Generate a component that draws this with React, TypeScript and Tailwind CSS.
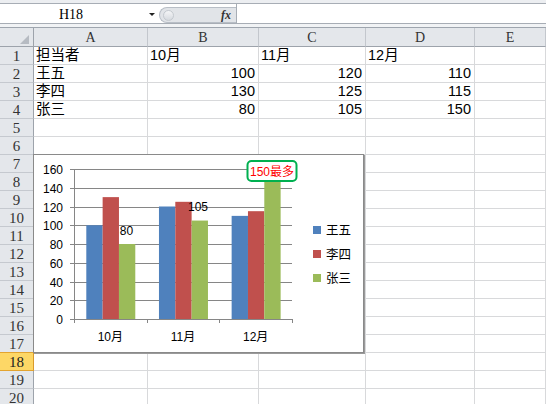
import React from "react";

const COLS = ["A", "B", "C", "D", "E"];
type Cell = { t: string; r?: boolean };
const DATA: Cell[][] = [
  [{ t: "担当者" }, { t: "10月" }, { t: "11月" }, { t: "12月" }],
  [{ t: "王五" }, { t: "100", r: true }, { t: "120", r: true }, { t: "110", r: true }],
  [{ t: "李四" }, { t: "130", r: true }, { t: "125", r: true }, { t: "115", r: true }],
  [{ t: "张三" }, { t: "80", r: true }, { t: "105", r: true }, { t: "150", r: true }],
];

const SERIES = [
  { name: "王五", color: "#4f81bd", vals: [100, 120, 110] },
  { name: "李四", color: "#c0504d", vals: [130, 125, 115] },
  { name: "张三", color: "#9bbb59", vals: [80, 105, 150] },
];
const MONTHS = ["10月", "11月", "12月"];

const yOf = (v: number) => 164 - v * 0.9375;
const CAT = 72.67;
const BW = 16.33;
const SERIF = '"Liberation Serif","Noto Sans CJK SC",serif';

function Chart() {
  const ticks = [0, 20, 40, 60, 80, 100, 120, 140, 160];
  return (
    <svg width="329" height="197" className="block" style={{ fontFamily: '"Liberation Sans","Noto Sans CJK SC",sans-serif' }}>
      {ticks.map((v) => {
        const y = Math.round(yOf(v)) + 0.5;
        return (
          <g key={v}>
            <line x1={36} x2={258} y1={y} y2={y} stroke="#868686" strokeWidth={1} />
            <text x={29} y={y + 4} fontSize={12} textAnchor="end" fill="#000">
              {v}
            </text>
          </g>
        );
      })}
      {SERIES.map((s, si) =>
        s.vals.map((v, ci) => {
          const x = 40 + CAT * ci + 12.3 + BW * si;
          const y = yOf(v);
          return <rect key={si + "-" + ci} x={x} y={y} width={BW} height={164 - y} fill={s.color} />;
        })
      )}
      <line x1={40.5} x2={40.5} y1={14} y2={168} stroke="#868686" />
      {[40, 112.67, 185.33, 258].map((x) => (
        <line key={x} x1={Math.round(x) + 0.5} x2={Math.round(x) + 0.5} y1={164} y2={168} stroke="#868686" />
      ))}
      <line x1={40} x2={259} y1={164.5} y2={164.5} stroke="#868686" />
      {MONTHS.map((m, i) => (
        <text key={m} x={40 + CAT * i + CAT / 2} y={186} fontSize={12} textAnchor="middle" fill="#000">
          {m}
        </text>
      ))}
      <text x={92.5} y={79.5} fontSize={12} textAnchor="middle" fill="#000">80</text>
      <text x={164} y={56} fontSize={12} textAnchor="middle" fill="#000">105</text>
      <rect x={213.5} y={6} width={49} height={20} rx={4} fill="#fff" stroke="#00b050" strokeWidth={2} />
      <text x={238} y={20.5} fontSize={12} textAnchor="middle" fill="#ff0000">150最多</text>
      {SERIES.map((s, i) => {
        const cy = 75 + i * 24;
        return (
          <g key={s.name}>
            <rect x={279} y={cy - 4} width={8} height={8} fill={s.color} />
            <text x={292} y={cy + 4.5} fontSize={12.5} fill="#000">
              {s.name}
            </text>
          </g>
        );
      })}
    </svg>
  );
}

export default function App() {
  const rows = Array.from({ length: 20 }, (_, i) => i + 1);
  return (
    <div className="relative w-[546px] h-[404px] overflow-hidden bg-white" style={{ fontFamily: '"Liberation Sans","Noto Sans CJK SC",sans-serif' }}>
      {/* top strip */}
      <div className="h-[4px] bg-[#eceef1] border-b border-[#a7adb5]" />
      {/* formula bar */}
      <div className="flex h-[19px] bg-white">
        <div className="w-[142px] flex items-end justify-center pb-[1px] text-[14px] leading-[15px] text-black" style={{ fontFamily: SERIF }}>
          H18
        </div>
        <div className="w-[17px] flex items-center pl-[7px] pt-[2px]">
          <div className="w-0 h-0 border-l-[3px] border-r-[3px] border-t-[3px] border-l-transparent border-r-transparent border-t-[#222]" />
        </div>
        <div className="mt-[3px] w-[77px] flex items-center rounded-l-full border border-r-0 border-[#b8bec6] bg-[#e1e4e8]">
          <div className="ml-[3px] w-[11px] h-[11px] rounded-full border border-[#c4c9cf] bg-gradient-to-b from-[#f4f5f7] to-[#d6dadf]" />
          <div className="flex-1" />
          <span className="mr-[5px] italic font-bold text-[12px] leading-none text-[#333]" style={{ fontFamily: SERIF }}>
            fx
          </span>
        </div>
        <div className="w-[1px] bg-[#a7adb5]" />
        <div className="flex-1 bg-white" />
      </div>
      <div className="h-[1px] bg-[#a7adb5]" />
      <div className="h-[3px] bg-[#f1f3f5]" />
      <div className="h-[1px] bg-[#9ea5ae]" />
      {/* grid */}
      <div className="grid grid-cols-[34px_114px_111px_107px_109px_1fr]">
        <div className="relative h-[19px] bg-[#e4e7eb] border-r border-b border-[#9da3ab]">
          <svg width="10" height="9" className="absolute right-[3px] bottom-[2px]">
            <polygon points="9,0 9,9 0,9" fill="#b6bbc2" />
          </svg>
        </div>
        {COLS.map((c) => (
          <div
            key={c}
            className="h-[19px] bg-[#e4e7eb] border-r border-b border-r-[#c3c7cd] border-b-[#9da3ab] flex items-end justify-center pb-[1px] text-[14px] leading-[15px] text-[#333]"
            style={{ fontFamily: SERIF }}
          >
            {c}
          </div>
        ))}
        {rows.map((r) => {
          const sel = r === 18;
          const rowData = DATA[r - 1];
          return (
            <React.Fragment key={r}>
              <div
                className={
                  sel
                    ? "-mt-[1px] h-[19px] bg-[#fdd766] border-r border-r-[#d99a2b] border-b border-b-[#e3a430] border-t border-t-[#e3a430] flex items-end justify-center text-[15px] leading-[16px] text-[#222]"
                    : "h-[18px] bg-[#e4e7eb] border-r border-r-[#9da3ab] border-b border-b-[#c5c9cf] flex items-end justify-center text-[15px] leading-[16px] text-[#333]"
                }
                style={{ fontFamily: SERIF }}
              >
                {r}
              </div>
              {COLS.map((c, ci) => {
                const cell = rowData ? rowData[ci] : undefined;
                return (
                  <div
                    key={c}
                    className={
                      "h-[18px] border-r border-b border-[#d8d9db] flex items-end overflow-hidden whitespace-nowrap text-[14.5px] leading-[17px] text-black " +
                      (cell && cell.r ? "justify-end pr-[3px]" : "justify-start pl-[2px]")
                    }
                  >
                    {cell ? cell.t : ""}
                  </div>
                );
              })}
            </React.Fragment>
          );
        })}
      </div>
      <div className="absolute left-[33px] top-[154px] w-[331px] h-[199px] bg-white border border-[#8a8a8a] shadow-[1px_1px_0_#9a9a9a]">
        <Chart />
      </div>
    </div>
  );
}
